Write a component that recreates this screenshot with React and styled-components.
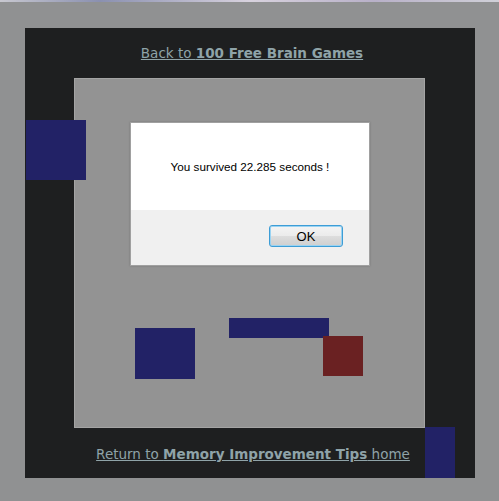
import React from 'react';
import styled, { createGlobalStyle } from 'styled-components';

const GlobalStyle = createGlobalStyle`
  html, body {
    margin: 0;
    padding: 0;
    background: #909192;
  }
  body {
    font-family: "DejaVu Sans", Verdana, sans-serif;
  }
`;

const blocks = [
  { x: 1, y: 92, w: 60, h: 60, color: '#222266' },
  { x: 110, y: 300, w: 60, h: 51, color: '#222266' },
  { x: 204, y: 290, w: 100, h: 20, color: '#222266' },
  { x: 400, y: 399, w: 30, h: 51, color: '#222266' },
  { x: 298, y: 308, w: 40, h: 40, color: '#6a2122' },
];

const App = () => {
  return (
    <Page>
      <GlobalStyle />
      <TopLine />
      <Board>
        <LinkRow $shift={4}>
          <NavLink href="#">Back to <b>100 Free Brain Games</b></NavLink>
        </LinkRow>
        <Field />
        <LinkRow $shift={6} $bottom>
          <NavLink href="#">Return to <b>Memory Improvement Tips</b> home</NavLink>
        </LinkRow>
        {blocks.map((b, i) => (
          <Block
            key={i}
            $color={b.color}
            style={{ left: b.x, top: b.y, width: b.w, height: b.h }}
          />
        ))}
      </Board>

      <Dialog>
        <DialogBody>You survived 22.285 seconds !</DialogBody>
        <DialogFooter>
          <OkButton>OK</OkButton>
        </DialogFooter>
      </Dialog>
    </Page>
  );
};

const Page = styled.div`
  position: relative;
  width: 499px;
  height: 501px;
  overflow: hidden;
  background: #909192;
`;

const TopLine = styled.div`
  height: 2px;
  background: linear-gradient(90deg, #c8c8d0 0%, #8a90b0 20%, #d8d2de 50%, #b8b0c8 75%, #d0d0d8 100%);
  margin-bottom: 26px;
`;

const Board = styled.div`
  position: relative;
  margin-left: 25px;
  width: 450px;
  height: 450px;
  background: #1e1f20;
  display: flex;
  flex-direction: column;
`;

const LinkRow = styled.div`
  height: 50px;
  display: flex;
  align-items: center;
  justify-content: center;
  box-sizing: border-box;
  padding-top: ${(p) => (p.$bottom ? '2px' : '0')};
  padding-left: ${(p) => p.$shift}px;
`;

const NavLink = styled.a`
  color: #8fa3a8;
  font-size: 13.5px;
  text-decoration: underline;

  b {
    font-weight: bold;
  }
`;

const Field = styled.div`
  margin-left: 49px;
  width: 349px;
  height: 348px;
  background: #939393;
  border: 1px solid #a4a4a4;
`;

const Block = styled.div`
  position: absolute;
  background: ${(p) => p.$color};
`;

const Dialog = styled.div`
  position: absolute;
  left: 130px;
  top: 122px;
  width: 238px;
  height: 142px;
  border: 1px solid #a0a0a0;
  background: #ffffff;
  display: flex;
  flex-direction: column;
  box-shadow: 0 0 2px rgba(0, 0, 0, 0.2);
`;

const DialogBody = styled.div`
  height: 87px;
  display: flex;
  align-items: center;
  justify-content: center;
  font-family: "Liberation Sans", Arial, sans-serif;
  font-size: 11.7px;
  color: #000;
`;

const DialogFooter = styled.div`
  flex: 1;
  background: #f0f0f0;
  display: flex;
  justify-content: flex-end;
  align-items: flex-start;
  padding: 15px 26px 0 0;
`;

const OkButton = styled.button`
  width: 74px;
  height: 22px;
  border: 1px solid #3d9dd6;
  border-radius: 3px;
  background: linear-gradient(#f4f4f4 0%, #ebebeb 50%, #dddddd 51%, #cfcfcf 100%);
  font-family: "Liberation Sans", Arial, sans-serif;
  font-size: 13px;
  color: #000;
  padding: 0;
  box-shadow: inset 0 0 0 1px #9ad3f2;
`;

export default App;
